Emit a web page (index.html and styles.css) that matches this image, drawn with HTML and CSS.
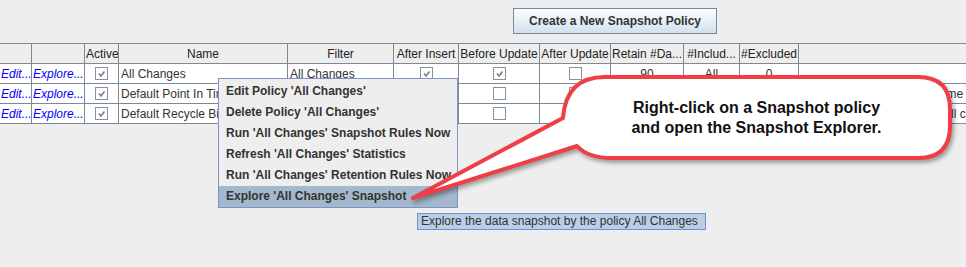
FILE: index.html
```html
<html><head>
<meta charset="utf-8">
<link rel="stylesheet" href="styles.css">
<title>Snapshot Policies</title>
</head><body>

<div class="toolbar"><button class="create-btn" type="button">Create a New Snapshot Policy</button></div>

<table class="policies">
<colgroup>
<col style="width:32px"><col style="width:53px"><col style="width:34px"><col style="width:169px">
<col style="width:106px"><col style="width:65px"><col style="width:81px"><col style="width:71px">
<col style="width:73px"><col style="width:56px"><col style="width:59px"><col style="width:300px">
</colgroup>
<thead><tr>
<th></th><th></th><th>Active</th><th>Name</th><th>Filter</th><th>After Insert</th><th>Before Update</th>
<th>After Update</th><th>Retain #Da...</th><th>#Includ...</th><th>#Excluded</th><th class="desc"></th>
</tr></thead>
<tbody>
<tr>
<td class="link">Edit...</td><td class="link">Explore...</td>
<td class="chk"><span class="cb"><svg width="11" height="11" viewBox="0 0 11 11"><path d="M3 5.5 L5 8 L8.5 3.5" fill="none" stroke="#7d7d7d" stroke-width="1.6"/></svg></span></td>
<td>All Changes</td><td>All Changes</td>
<td class="chk"><span class="cb"><svg width="11" height="11" viewBox="0 0 11 11"><path d="M3 5.5 L5 8 L8.5 3.5" fill="none" stroke="#7d7d7d" stroke-width="1.6"/></svg></span></td>
<td class="chk"><span class="cb"><svg width="11" height="11" viewBox="0 0 11 11"><path d="M3 5.5 L5 8 L8.5 3.5" fill="none" stroke="#7d7d7d" stroke-width="1.6"/></svg></span></td>
<td class="chk"><span class="cb"></span></td>
<td class="num">90</td><td class="num">All</td><td class="num">0</td><td class="desc"></td>
</tr>
<tr>
<td class="link">Edit...</td><td class="link">Explore...</td>
<td class="chk"><span class="cb"><svg width="11" height="11" viewBox="0 0 11 11"><path d="M3 5.5 L5 8 L8.5 3.5" fill="none" stroke="#7d7d7d" stroke-width="1.6"/></svg></span></td>
<td>Default Point In Time</td><td>All Changes</td>
<td class="chk"><span class="cb"></span></td>
<td class="chk"><span class="cb"></span></td>
<td class="chk"><span class="cb"></span></td>
<td class="num">30</td><td class="num">All</td><td class="num">0</td><td class="desc">Keep data as of a point in time read-only</td>
</tr>
<tr>
<td class="link">Edit...</td><td class="link">Explore...</td>
<td class="chk"><span class="cb"><svg width="11" height="11" viewBox="0 0 11 11"><path d="M3 5.5 L5 8 L8.5 3.5" fill="none" stroke="#7d7d7d" stroke-width="1.6"/></svg></span></td>
<td>Default Recycle Bin</td><td>Deletes</td>
<td class="chk"><span class="cb"></span></td>
<td class="chk"><span class="cb"></span></td>
<td class="chk"><span class="cb"></span></td>
<td class="num">30</td><td class="num">All</td><td class="num">0</td><td class="desc">Keeps removed rows from all changes</td>
</tr>
</tbody>
</table>

<div class="popup-menu">
<div class="item">Edit Policy 'All Changes'</div>
<div class="item">Delete Policy 'All Changes'</div>
<div class="item">Run 'All Changes' Snapshot Rules Now</div>
<div class="item">Refresh 'All Changes' Statistics</div>
<div class="item">Run 'All Changes' Retention Rules Now</div>
<div class="item selected">Explore 'All Changes' Snapshot</div>
</div>

<div class="tooltip">Explore the data snapshot by the policy All Changes</div>

<!-- annotation callout -->
<svg class="callout-shape" width="966" height="267" viewBox="0 0 966 267">
<path d="M605 77 H918 Q950 77 950 109 V126 Q950 158 918 158 H612 Q588 158 577 146 L413 198 L563 118 Q566 77 605 77 Z" fill="#fff" stroke="#ef3e46" stroke-width="4" stroke-linejoin="round"/>
</svg>
<div class="callout-text">Right-click on a Snapshot policy<br>and open the Snapshot Explorer.</div>

</body></html>
```

FILE: styles.css
```css
body {margin: 0; padding: 0; background: #eeeeee; font-family: "Liberation Sans", Arial, sans-serif; font-size: 12px; color: #333333; width: 966px; height: 267px; overflow: hidden; position: relative;}

.toolbar {height: 43px; box-sizing: border-box; padding: 8px 0 0 513px; display: flex; align-items: flex-start;}
.create-btn {width: 204px; height: 26px; padding: 0; border: 1px solid #7a8a99; background: linear-gradient(#fdfeff, #d2e0ee); font: bold 12px "Liberation Sans", Arial, sans-serif; color: #333333;}

table.policies {border-collapse: separate; border-spacing: 0; table-layout: fixed; width: 1099px; border-top: 1px solid #7a8a99;}
.policies tr {height: 20px;}
.policies th, .policies td {padding: 0 2px; border-right: 1px solid #7a8a99; border-bottom: 1px solid #7a8a99; white-space: nowrap; overflow: hidden; font-size: 12px;}
.policies th {background: #eeeeee; font-weight: normal; text-align: center; color: #222222; padding: 0 1px;}
.policies td {background: #ffffff; text-align: left;}
.policies .desc {border-right: none;}
.policies td.link {color: #0000ff; font-style: italic; padding-left: 1px;}
.policies td.chk, .policies td.num {text-align: center;}
.cb {display: inline-block; width: 13px; height: 13px; box-sizing: border-box; border: 1px solid #8593a1; background: #ffffff; vertical-align: middle;}
.cb svg {display: block;}

.popup-menu {position: absolute; left: 218px; top: 78px; width: 240px; box-sizing: border-box; border: 1px solid #7b93c5; background: #eeeeee; padding: 2px 0 0;}
.popup-menu .item {height: 21px; line-height: 21px; padding-left: 7px; font-weight: bold; color: #333333; white-space: nowrap;}
.popup-menu .item.selected {background: #a3b8cc;}

.tooltip {position: absolute; left: 417px; top: 213px; width: 289px; height: 17px; box-sizing: border-box; border: 1px solid #6f8fcf; background: #b8cfe5; padding-left: 3px; line-height: 15px; color: #333333; white-space: nowrap;}

.callout-shape {position: absolute; left: 0; top: 0; pointer-events: none; filter: drop-shadow(2px 3px 2px rgba(0,0,0,0.35));}
.callout-text {position: absolute; left: 563px; top: 77px; width: 387px; height: 81px; display: flex; align-items: center; justify-content: center; text-align: center; font: bold 16px/20px "Liberation Sans", Arial, sans-serif; color: #111111;}
```
